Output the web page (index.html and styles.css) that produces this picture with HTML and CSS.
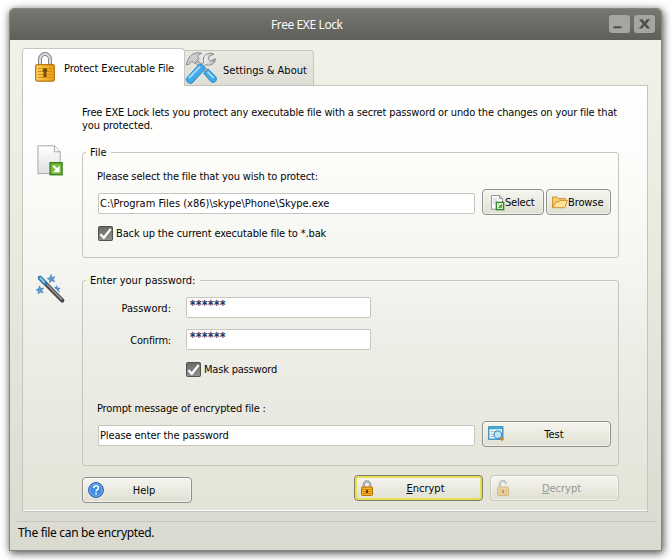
FILE: index.html
```html
<!DOCTYPE html>
<html lang="en">
<head>
<meta charset="utf-8">
<title>Free EXE Lock</title>
<link rel="stylesheet" href="styles.css">
</head>
<body>
<svg class="defs" width="0" height="0" aria-hidden="true">
  <defs>
    <linearGradient id="gold" x2="1" y2="0"><stop offset="0" stop-color="#fdd05d"/><stop offset=".5" stop-color="#f5b52f"/><stop offset="1" stop-color="#e59a13"/></linearGradient>
    <linearGradient id="steel" x2="1" y2="0"><stop offset="0" stop-color="#b5b5b5"/><stop offset=".4" stop-color="#f0f0f0"/><stop offset="1" stop-color="#a5a5a5"/></linearGradient>
    <linearGradient id="paper" x2="0" y2="1"><stop offset="0" stop-color="#fff"/><stop offset="1" stop-color="#dfdfdf"/></linearGradient>
    <symbol id="lock" viewBox="0 0 20 30">
      <path d="M5 14V7.5a5 5.5 0 0 1 10 0V14" fill="none" stroke="#85858a" stroke-width="4"/>
      <path d="M5 14V7.5a5 5.5 0 0 1 10 0V14" fill="none" stroke="#dedee2" stroke-width="2"/>
      <rect x=".6" y="12.6" width="18.8" height="16.6" rx="1.8" fill="url(#gold)" stroke="#b97812" stroke-width="1.2"/>
      <path d="M3 16.5h14M3 19.5h14M3 22.5h14M3 25.5h14" stroke="#d58f18" stroke-width="1"/>
      <path d="M10 16a2.4 2.4 0 0 0-1.3 4.4L8.4 25h3.2l-.3-4.6A2.4 2.4 0 0 0 10 16z" fill="#774a0c"/>
    </symbol>
    <symbol id="smalllock" viewBox="0 0 12 16">
      <path d="M2.8 8V4.8a3.2 3.4 0 0 1 6.4 0V8" fill="none" stroke="#8b8b93" stroke-width="2.2"/>
      <path d="M2.8 8V4.8a3.2 3.4 0 0 1 6.4 0V8" fill="none" stroke="#d4d4dd" stroke-width=".9"/>
      <rect x=".5" y="7" width="11" height="8.5" rx=".8" fill="#f6ae1d" stroke="#b46e0a"/>
      <path d="M1.5 9.5h9M1.5 11.5h9M1.5 13.5h9" stroke="#ce810b" stroke-width=".8"/>
      <path d="M5 10h2v3H5z" fill="#5f3a08"/>
    </symbol>
    <symbol id="file" viewBox="0 0 26 32">
      <path d="M.9.8H17.6L23.2 6.6V28.6H.9z" fill="url(#paper)" stroke="#a9a9a9"/>
      <path d="M17.4 1V6.8h5.7" fill="#f8f8f8" stroke="#a9a9a9"/>
      <rect x="13.1" y="17.7" width="12" height="12" fill="#78b83b" stroke="#39801f" stroke-width="1.4"/>
      <path d="M16.2 20.8l4 4" stroke="#fff" stroke-width="2.2"/><path d="M22.6 20.6v6.6H16z" fill="#fff"/>
    </symbol>
    <linearGradient id="boxfill" x2="0" y2="1"><stop offset="0" stop-color="#696a67"/><stop offset="1" stop-color="#91928e"/></linearGradient>
    <symbol id="tick" viewBox="0 0 15 15"><rect x=".5" y=".5" width="14" height="14" rx="1" fill="url(#boxfill)" stroke="#51524e"/><path d="M2.4 8.3l3.4 3.5L12.7 3" fill="none" stroke="#fff" stroke-width="2.2"/></symbol>
  </defs>
</svg>
<div class="window">
  <header class="titlebar">
    <h1>Free EXE Lock</h1>
    <div class="controls">
      <span class="control"><svg width="21" height="18"><path d="M4.5 12.3h8" stroke="#4d4e49" stroke-width="2"/></svg></span>
      <span class="control"><svg width="21" height="18"><path d="M5 4.2h3.5l2.1 2.9 2.2-2.9h3.4l-3.9 4.7 4 4.7h-3.5l-2.3-3-2.3 3H4.8l4-4.7z" fill="#4d4e49"/></svg></span>
    </div>
  </header>
  <main class="body">
    <nav class="tabs">
      <a class="tab active"><svg class="tab-lock"><use href="#lock"/></svg><span class="t-protect">Protect Executable File</span></a>
      <a class="tab"><svg class="tab-tools" width="32" height="32" viewBox="0 0 32 32">
        <path d="M20.3 20.7L9.5 10.2l2.4-2.6 11 10.7z" fill="#c2c3c5" stroke="#8b8d8f"/>
        <path d="M1.4 12.8C2.2 7.9 5.2 3 9.2 1.5c2.7-1 5.1-.9 7.4-.1-2.7.9-4.1 2.1-3.5 4.1l1.2 1.1-4.7 4.9-1.8-1.7c-1.5-.3-2.7.4-3.4 2.3z" fill="#cbccce" stroke="#888"/>
        <path d="M14 15.5l4.8-5.4c-1.5-3.9.7-7.8 5.7-8.8 1.7-.3 3.1.1 4.3.8L24 4.5c-.9 2-.4 3.7 1.6 4.4l4.7-2.2c.2 3.3-2.5 6.5-6.7 6.4-1.2 0-2.1-.2-2.9-.6l-4.8 5.2z" fill="url(#steel)" stroke="#888"/>
        <path d="M1.5 26.2L14.2 12.2c2.8-.5 6 2.2 5.6 5.2L7.1 31c-3.2 1.2-6.7-1.6-5.6-4.8z" fill="#42a9e6" stroke="#2a8ac8"/>
        <path d="M4 26L15.2 14.4" stroke="#9bdafb" stroke-width="2"/>
        <path d="M18.6 21.4l4.5-4.5 7.6 7.8c2.4 3.4-1.6 7.4-4.8 4.9z" fill="#42a9e6" stroke="#2a8ac8"/>
        <path d="M22.6 19.8l6 6.2" stroke="#9bdafb" stroke-width="1.8"/>
      </svg><span class="t-settings">Settings &amp; About</span></a>
    </nav>
    <section class="panel">
      <p class="intro"><span class="t-intro1">Free EXE Lock lets you protect any executable file with a secret password or undo the changes on your file that</span><br><span class="t-intro2">you protected.</span></p>
      <div class="section file-section">
        <svg class="side-icon file-icon" width="26" height="32"><use href="#file"/></svg>
        <fieldset class="group">
          <legend>File</legend>
          <div class="label select-label"><span class="t-select-label">Please select the file that you wish to protect:</span></div>
          <div class="field-row">
            <div class="input wide"><span>C:\Program Files (x86)\skype\Phone\Skype.exe</span></div>
            <button class="btn small select"><svg width="15" height="17" viewBox="0 0 15 17">
              <path d="M1.5 1.5h8l3 3v10.7h-11z" fill="#fbfbfd" stroke="#9297a0"/><path d="M9.5 1.5v3h3" fill="none" stroke="#9297a0"/>
              <path d="M3 5h4M3 7h4M3 9h3" stroke="#c3c9d5"/>
              <rect x="6.4" y="8.4" width="7.2" height="7.2" fill="#fff" stroke="#348a28" stroke-width="1.5"/><path d="M8.4 10.4l2 2m1.4-2.2v3.4H8.4z" fill="#64a83d" stroke="#64a83d"/>
            </svg><span class="t-select">Select</span></button>
            <button class="btn small browse"><svg width="16" height="14" viewBox="0 0 16 14">
              <path d="M.5 12.7V2h4.8l1.3 1.7h6.7v2.2" fill="#f7ce70" stroke="#cf902e"/>
              <path d="M.7 12.7L3.6 7h3.1l1.4-1.6h7.3l-2.6 7.3z" fill="#ffe39a" stroke="#cf902e"/>
            </svg><span class="t-browse">Browse</span></button>
          </div>
          <div class="check"><svg class="box" width="15" height="15"><use href="#tick"/></svg><span class="t-backup">Back up the current executable file to *.bak</span></div>
        </fieldset>
      </div>
      <div class="section pass-section">
        <svg class="side-icon wand" width="30" height="32" viewBox="0 0 30 32">
          <path d="M4 3.9L26.3 26.4" stroke="#434548" stroke-width="4.2" stroke-linecap="round"/>
          <path d="M9.5 9L26 25.6" stroke="#96989a" stroke-width="1.5"/>
          <path d="M4 3.9L9 9" stroke="#2573a9" stroke-width="4.2" stroke-linecap="round"/><path d="M3.8 3.5l5 5.2" stroke="#85cdf0" stroke-width="2"/>
          <path d="M15 .5l1 2.9 3-.6-1.9 2.3 1.6 2.7-2.9-1-2.2 2 .1-2.9-2.6-1.4 2.8-.8zM3.6 11.7l1 2.9 3-.6-1.9 2.3 1.6 2.7-2.9-1-2.2 2 .1-2.9-2.6-1.4 2.8-.8zM20.6 11.7l.8 2.4 2.6-.1-1.6 2 1 2.1-5-4.8 1.6.4z" fill="#5a9cd9" stroke="#3469a9" stroke-width=".5"/>
        </svg>
        <fieldset class="group">
          <legend>Enter your password:</legend>
          <div class="pass-grid">
            <span class="label">Password:</span><div class="input stars"><span class="t-stars">******</span></div>
            <span class="label t-confirm">Confirm:</span><div class="input stars"><span class="t-stars">******</span></div>
          </div>
          <div class="check mask"><svg class="box" width="15" height="15"><use href="#tick"/></svg><span class="t-mask">Mask password</span></div>
          <div class="label prompt"><span class="t-prompt">Prompt message of encrypted file :</span></div>
          <div class="field-row">
            <div class="input wide"><span class="t-please">Please enter the password</span></div>
            <button class="btn test"><svg width="17" height="16" viewBox="0 0 17 16">
              <rect x=".8" y=".8" width="14" height="12.4" fill="#edf7fc" stroke="#2581b9" stroke-width="1.2"/><path d="M1 2.2h13.6" stroke="#39a4d7" stroke-width="2"/>
              <path d="M3 5.5h5M3 8h3M3 10.5h4" stroke="#9eabb4" stroke-dasharray="2 1"/>
              <path d="M12.3 11.6l2.7 2.6" stroke="#d48616" stroke-width="2.6"/>
              <circle cx="9.8" cy="8.7" r="3.8" fill="#bce5f8" stroke="#4c94c2" stroke-width="1.3"/>
            </svg><span class="caption">Test</span></button>
          </div>
        </fieldset>
      </div>
      <div class="actions">
        <button class="btn help"><svg width="16" height="16" viewBox="0 0 16 16"><circle cx="8" cy="8" r="7.4" fill="#3f8de0" stroke="#2255a0"/><circle cx="8" cy="8" r="6.2" fill="none" stroke="#88bff3" stroke-width=".8"/><path d="M5.7 6.1C5.8 3 10.6 3 10.5 5.9c0 1.8-2.4 1.8-2.4 3.7" fill="none" stroke="#fff" stroke-width="1.6"/><path d="M7.2 10.8h1.7v1.6H7.2z" fill="#fff"/></svg><span class="caption">Help</span></button>
        <button class="btn encrypt"><svg width="12" height="16"><use href="#smalllock"/></svg><span class="caption"><u>E</u>ncrypt</span></button>
        <button class="btn decrypt" disabled><svg width="12" height="16" viewBox="0 0 12 16">
          <path d="M2.8 7.5V4.8a3.2 3.4 0 0 1 6.4-1" fill="none" stroke="#9a9aa1" stroke-width="2.2"/>
          <rect x=".5" y="7" width="11" height="8.5" rx=".8" fill="#f6bf55" stroke="#c28e3b"/><path d="M1.5 9.5h9M1.5 11.5h9M1.5 13.5h9" stroke="#d69e43" stroke-width=".8"/><path d="M5 10h2v3H5z" fill="#745629"/>
        </svg><span class="caption"><u>D</u>ecrypt</span></button>
      </div>
    </section>
  </main>
  <footer class="status"><span>The file can be encrypted.</span></footer>
</div>
</body>
</html>
```
FILE: styles.css
```css
* { box-sizing: border-box; }
html, body { height: 100%; }
body {
  margin: 0;
  padding: 9px 10px;
  background: #fff;
  overflow: hidden;
  font: 11px/13px "DejaVu Sans Condensed", "DejaVu Sans", sans-serif;
  font-stretch: condensed;
  color: #050505;
}
.defs { position: absolute; }
svg { display: block; flex: none; }
span { white-space: nowrap; }

.window {
  width: 651px;
  height: 541px;
  display: flex;
  flex-direction: column;
  border-radius: 4px 4px 0 0;
  background: linear-gradient(#f2f3e9, #e8e8df 50%, #dadad1);
  box-shadow: 0 0 0 1px #85867f, 1px 2px 8px 1px rgba(0, 0, 0, .75);
}
.titlebar {
  height: 31px;
  flex: none;
  display: flex;
  justify-content: space-between;
  align-items: center;
  padding: 0 6px 0 261px;
  border-radius: 4px 4px 0 0;
  background: linear-gradient(#777872, #696a64 55%, #5e5f59);
}
h1 {
  margin: 0;
  font: 12px/16px "Noto Sans", sans-serif;
  letter-spacing: -.4px;
  color: #fafafa;
}
.controls { display: flex; gap: 4px; margin-top: -2px; }
.control {
  width: 21px;
  height: 18px;
  border-radius: 3px;
  background: #a5a6a2;
}

.body { padding: 8px 13px 0 12px; }
.tabs { display: flex; align-items: flex-end; height: 37px; }
.tab {
  display: flex;
  align-items: center;
  width: 129px;
  height: 35px;
  border: 1px solid #c7c7bf;
  border-left: 0;
  border-bottom: 0;
  border-radius: 0 4px 0 0;
  background: linear-gradient(#e9e9e2, #deded7);
}
.tab.active {
  position: relative;
  width: 163px;
  height: 38px;
  margin-bottom: -1px;
  padding-left: 12px;
  border-left: 1px solid #c7c7bf;
  border-radius: 4px 4px 0 0;
  background: #fff;
}
.tab-lock { width: 20px; height: 30px; margin-top: -1px; }
.tab.active > span { margin: 2px 0 0 9px; }
.tab:not(.active) > span { margin: 4px 0 0 6px; }
.tab-tools { margin-top: -1px; }

.panel {
  width: 626px;
  height: 427px;
  padding: 20px 27px 0 12px;
  border: 1px solid #c3c4bb;
  background: linear-gradient(#fff, #fdfdfb 15%, #f4f4f0 45%, #eeeee8 60%, #e4e3d7);
  box-shadow: inset 0 -1px #fff;
}
.intro { margin: 0 0 14px 47px; }
.section { display: flex; }
.file-section { height: 128px; }
.file-icon { margin: -1px 19px 0 2px; }
.pass-section { height: 192px; }
.wand { margin: 0 16px 0 1px; }
.side-icon { flex: none; }
.group {
  min-width: 0;
  flex: none;
  width: 537px;
  height: 112px;
  margin: 0;
  padding: 0 7px 0 15px;
  border: 1px solid #c5c6be;
  border-radius: 3px;
}
.pass-section .group { height: 192px; }
legend { margin-left: -12px; padding: 0 5px 0 4px; height: 13px; }
.label { height: 13px; }
.select-label { margin: 11px 0 0 -1px; }
.field-row { display: flex; align-items: flex-start; height: 26px; }
.select-label + .field-row { margin-top: 6px; }
.input {
  height: 21px;
  padding: 3px 1px;
  border: 1px solid #c5c6be;
  border-radius: 2px;
  background: #fff;
}
.wide { width: 377px; margin: 4px 7px 0 0; }
.btn {
  display: flex;
  align-items: center;
  height: 26px;
  margin: 0;
  padding: 0 7px 0 6px;
  border: 1px solid #8f908b;
  border-radius: 4px;
  background: linear-gradient(#f6f6f0, #e9e9df 55%, #dfdfd2);
  box-shadow: inset 0 0 0 1px rgba(255, 255, 255, .55);
  font: inherit;
  color: inherit;
}
.small { padding: 0 0 0 7px; }
.select { width: 62px; margin-right: 2px; }
.browse { width: 65px; padding-left: 5px; }
.check { display: flex; align-items: center; gap: 3px; height: 15px; margin-top: 11px; }
.pass-grid {
  display: grid;
  grid-template-columns: 73px 185px;
  grid-auto-rows: 21px;
  gap: 11px 15px;
  align-items: center;
  margin-top: 10px;
}
.pass-grid .label { text-align: right; padding-top: 1px; height: 14px; }
.pass-grid .stars { padding-top: 1px; color: #0a2c60; }
.mask { margin: 12px 0 0 88px; }
.prompt { margin: 25px 0 6px -1px; }
.caption { flex: 1; text-align: center; }
.test { width: 129px; padding-left: 5px; }
.actions { display: flex; align-items: flex-start; margin: 9px 0 0 47px; }
.actions .btn { flex: none; width: 129px; }
.actions .help { width: 110px; margin: 2px 162px 0 0; padding-left: 5px; }
.actions .encrypt { margin-right: 7px; padding-right: 4px; border-color: #7d7e68; box-shadow: inset 0 0 0 2px #e6df57; }
.actions .decrypt { padding-right: 4px; border-color: #c5c6be; color: #979790; }
.decrypt svg { opacity: .5; }

.t-protect, .t-intro2, .t-please, .t-browse { letter-spacing: -.1px; }
.t-intro1, .t-prompt { letter-spacing: -.15px; }
.t-select-label, .t-backup { letter-spacing: -.13px; }
.t-mask, .t-confirm, .t-select { letter-spacing: -.2px; }
.t-stars { margin-left: 2px; font-size: 12px; letter-spacing: .6px; -webkit-text-stroke: .3px; }

.status {
  margin: 9px 5px 0;
  height: 29px;
  padding: 3px 3px;
  border-top: 1px solid #c1c2b9;
  font: 12px/16px "Noto Sans", sans-serif;
  letter-spacing: -.32px;
}
```
